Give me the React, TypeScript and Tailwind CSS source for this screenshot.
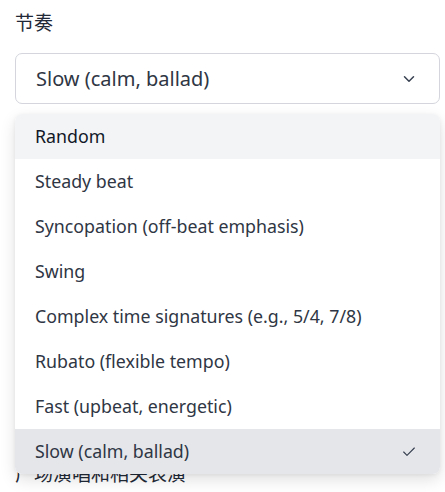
import {Check, ChevronDown} from "lucide-react";

const options = [
	"Random",
	"Steady beat",
	"Syncopation (off-beat emphasis)",
	"Swing",
	"Complex time signatures (e.g., 5/4, 7/8)",
	"Rubato (flexible tempo)",
	"Fast (upbeat, energetic)",
	"Slow (calm, ballad)",
]

const selected = "Slow (calm, ballad)"
const highlighted = "Random"

const App = () => {
	return (
		<div className="w-[445px] h-[492px] overflow-hidden bg-white pl-[15px] pr-[5px] pt-[10px] font-['Segoe_UI','Noto_Sans','Noto_Sans_CJK_SC',sans-serif] text-[#1f2937]">
			<div className="relative">
				<label className="block text-[19px] leading-[26px] text-[#1f2937]">节奏</label>
				<button
					className="mt-[17px] w-full h-[51px] flex items-center justify-between rounded-[7px] border border-[#d4d5dd] bg-white pl-[20px] pr-[21px] text-left">
					<span className="text-[20px] text-[#2f3644]">{selected}</span>
					<ChevronDown size={18} strokeWidth={2} className="text-[#374151]"/>
				</button>

				<ul
					className="absolute left-0 right-0 top-[104px] z-10 rounded-[7px] bg-white shadow-[0_6px_16px_rgba(0,0,0,0.12),0_1px_4px_rgba(0,0,0,0.06)] overflow-hidden">
					{options.map((o) => (
						<li
							key={o}
							className={
								"h-[45px] flex items-center justify-between pl-[20px] pr-[23px] text-[17.8px] text-[#2f3644] " +
								(o === selected ? "bg-[#e5e6ea]" : o === highlighted ? "bg-[#f3f4f6] text-[#111827]" : "")
							}>
							<span>{o}</span>
							{o === selected && <Check size={16} strokeWidth={1.75} className="text-[#374151]"/>}
						</li>
					))}
				</ul>

				<div className="mt-[24px]">
					<label className="block text-[19px] leading-[26px]">风格</label>
					<div className="mt-[17px] h-[51px] rounded-[7px] border border-[#d4d5dd]"/>
				</div>
				<div className="mt-[24px]">
					<label className="block text-[19px] leading-[26px]">乐器</label>
					<div className="mt-[17px] h-[51px] rounded-[7px] border border-[#d4d5dd]"/>
				</div>
				<div className="mt-[24px]">
					<label className="block text-[19px] leading-[26px]">情绪</label>
					<div className="mt-[17px] h-[51px] rounded-[7px] border border-[#d4d5dd]"/>
				</div>
				<div className="mt-[3px]">
					<label className="block text-[19px] leading-[26px]">广场演唱和相关表演</label>
				</div>
			</div>
		</div>
	)
}

export default App;
